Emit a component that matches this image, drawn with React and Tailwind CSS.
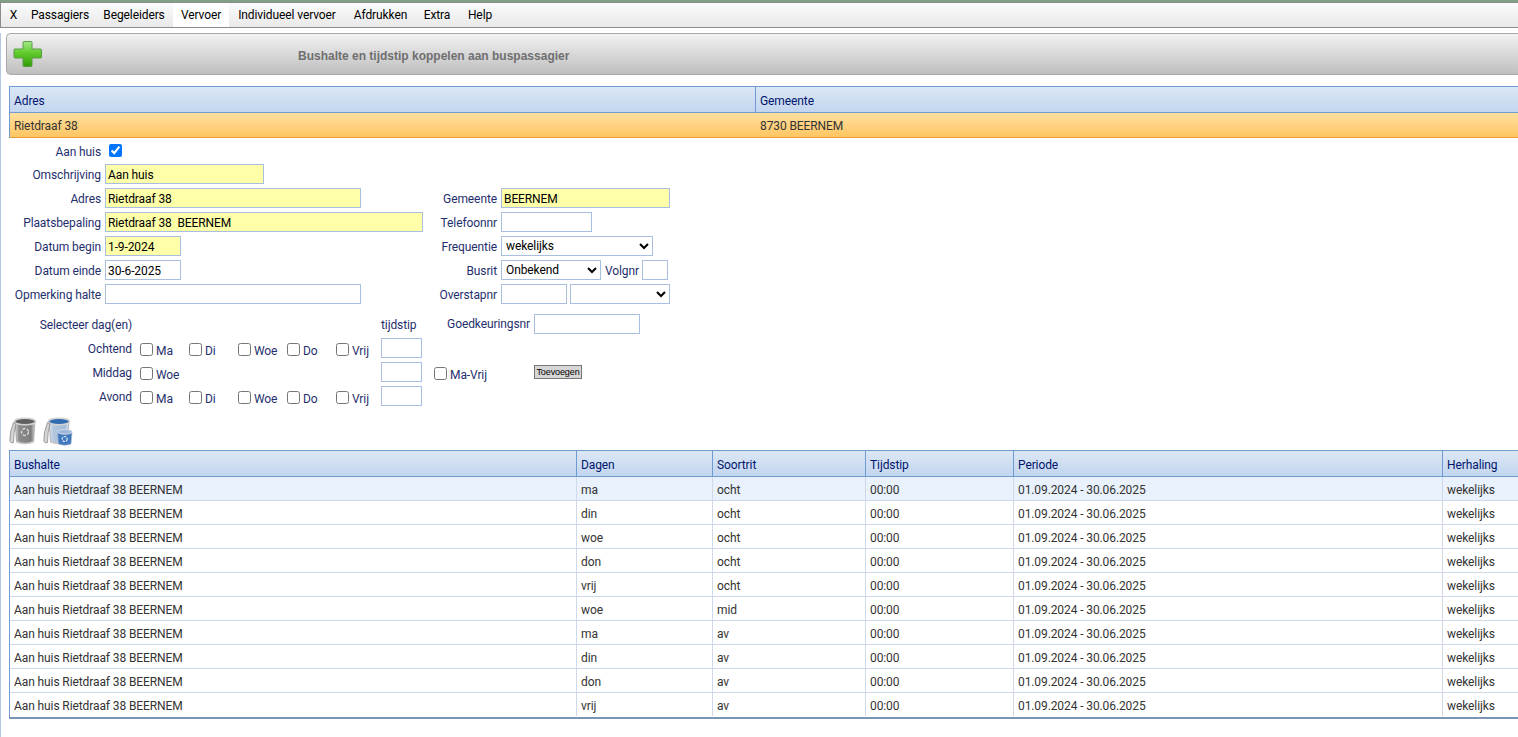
import React from 'react';

const menu = [
  { name: 'X', width: 'w-[23px]' },
  { name: 'Passagiers', width: 'w-[70px]' },
  { name: 'Begeleiders', width: 'w-[78px]' },
  { name: 'Vervoer', width: 'w-[56px]' },
  { name: 'Individueel vervoer', width: 'w-[116px]' },
  { name: 'Afdrukken', width: 'w-[71px]' },
  { name: 'Extra', width: 'w-[42px]' },
  { name: 'Help', width: 'w-[44px]' },
];

const columns = [
  { title: 'Bushalte', width: 'w-[567px]' },
  { title: 'Dagen', width: 'w-[136px]' },
  { title: 'Soortrit', width: 'w-[153px]' },
  { title: 'Tijdstip', width: 'w-[148px]' },
  { title: 'Periode', width: 'w-[429px]' },
  { title: 'Herhaling', width: 'flex-1' },
];

const stops = [
  ['ma', 'ocht'],
  ['din', 'ocht'],
  ['woe', 'ocht'],
  ['don', 'ocht'],
  ['vrij', 'ocht'],
  ['woe', 'mid'],
  ['ma', 'av'],
  ['din', 'av'],
  ['don', 'av'],
  ['vrij', 'av'],
];

const dayNames = ['Ma', 'Di', 'Woe', 'Do', 'Vrij'];

function PlusIcon() {
  return (
    <svg width="30" height="28" viewBox="0 0 30 28" className="block">
      <defs>
        <linearGradient id="plusFill" x1="0" y1="0" x2="0" y2="1">
          <stop offset="0" stopColor="#a5e88a" />
          <stop offset="0.45" stopColor="#62cc2c" />
          <stop offset="1" stopColor="#2f9c08" />
        </linearGradient>
      </defs>
      <path d="M11 1.5h7a1 1 0 0 1 1 1V9h8.500a1 1 0 0 1 1 1v7a1 1 0 0 1-1 1H19v7.500a1 1 0 0 1-1 1h-7a1 1 0 0 1-1-1V18H2a1 1 0 0 1-1-1v-7a1 1 0 0 1 1-1h8V2.500a1 1 0 0 1 1-1z" fill="url(#plusFill)" stroke="#5a9a48" strokeWidth="1" />
    </svg>
  );
}

function BinIcon({ blue }) {
  const id = blue ? 'binB' : 'binG';
  return (
    <svg width="30" height="29" viewBox="0 0 30 29" className="block">
      <defs>
        <linearGradient id={id} x1="0" y1="0" x2="1" y2="0">
          <stop offset="0" stopColor={blue ? '#e2e9f2' : '#e2e2e2'} />
          <stop offset="0.2" stopColor={blue ? '#b4c8df' : '#8c8c8c'} />
          <stop offset="0.8" stopColor={blue ? '#a3bbd6' : '#7d7d7d'} />
          <stop offset="1" stopColor={blue ? '#dfe8f2' : '#dcdcdc'} />
        </linearGradient>
      </defs>
      <path d="M6 4 L7.500 25 Q16 28.500 24.500 25 L26 4 Z" fill={`url(#${id})`} stroke="#8f8f8f" strokeWidth="0.6" />
      <ellipse cx="16" cy="4.500" rx="10.500" ry="3.200" fill={blue ? '#2f6db0' : '#5f5f5f'} stroke="#d2d2d2" strokeWidth="1.500" />
      <path d="M4.500 5.500 Q0.500 15 0.800 24 Q2 27 4.500 25.500 Q4.500 15 7 7 Z" fill="#d4d4d4" stroke="#7f7f7f" strokeWidth="0.7" />
      <path d="M7.500 24.500 Q16 28.500 25 24.500" fill="none" stroke="#c8c8c8" strokeWidth="1.500" />
      {!blue && <circle cx="16" cy="15" r="3.500" fill="none" stroke="#d8d8d8" strokeWidth="1.400" strokeDasharray="3 1.500" />}
      {blue && (
        <g>
          <path d="M14.500 15 L15.500 27 Q21.500 29.500 28 27 L29 15 Z" fill="#3f78bd" stroke="#9fb4cc" strokeWidth="0.6" />
          <ellipse cx="21.700" cy="14.800" rx="7.300" ry="2.400" fill="#9db8d8" stroke="#d5dde7" strokeWidth="1" />
          <circle cx="21.700" cy="22" r="2.500" fill="none" stroke="#e2eefa" strokeWidth="1.200" strokeDasharray="2.500 1" />
        </g>
      )}
    </svg>
  );
}

function Field({ value = '', width, yellow }) {
  return (
    <input
      readOnly
      value={value}
      className={`h-[20px] ${width} shrink-0 border border-[#a9bfdf] px-[2px] pt-[1px] text-[12px] leading-[16px] text-black outline-none ${yellow ? 'bg-[#ffffaa]' : 'bg-white'}`}
    />
  );
}

function Choice({ value, width }) {
  return (
    <select
      defaultValue={value}
      className={`h-[20px] ${width} shrink-0 border border-[#a9bfdf] bg-white text-[12px] text-black outline-none`}
    >
      <option value={value}>{value}</option>
    </select>
  );
}

function Row({ label, children, labelWidth = 'w-[100px]' }) {
  return (
    <div className="flex h-[24px] items-start gap-[4px]">
      <label className={`${labelWidth} h-[20px] shrink-0 text-right leading-[22px] text-[#1f2f6e]`}>{label}</label>
      {children}
    </div>
  );
}

function Check({ label, checked }) {
  return (
    <label className="flex items-center gap-[3px] text-[#1f2f6e]">
      <input type="checkbox" readOnly checked={!!checked} className="m-0 h-[13px] w-[13px] shrink-0" />
      {label && <span className="mt-[3px]">{label}</span>}
    </label>
  );
}

function DayRow({ label, days, children }) {
  return (
    <div className="flex h-[24px] items-start">
      <label className="h-[20px] w-[131px] shrink-0 text-right leading-[23px] text-[#1f2f6e]">{label}</label>
      <div className="flex h-[22px] w-[249px] shrink-0 pl-[8px]">
        {days.map((d) => (
          <div key={d} className="flex h-[22px] w-[49px] shrink-0">
            <Check label={d} />
          </div>
        ))}
      </div>
      <Field width="w-[41px]" />
      {children}
    </div>
  );
}

function HeaderCell({ title, width, last }) {
  return (
    <div className={`${width} flex items-center px-[4px] pt-[2px] text-[#00156e] ${last ? '' : 'border-r border-[#6f9bd1]'}`}>
      {title}
    </div>
  );
}

export default function App() {
  return (
    <div className="h-[737px] w-[1518px] overflow-hidden bg-white font-['Roboto',sans-serif] text-[12px] tracking-[-0.1px] text-[#333]">
      {/* menu */}
      <div className="h-[2px] bg-[#7f9f86]" />
      <div className="flex h-[26px] items-stretch border-y border-l border-b-[#8c8c8c] border-l-[#8c8c8c] border-t-[#8c8c8c] bg-gradient-to-b from-[#fbfbfb] to-[#e9e9e9] pl-[1px] text-black">
        {menu.map((m) => (
          <div key={m.name} className={`flex ${m.width} items-center justify-center whitespace-nowrap ${m.name === 'Vervoer' ? 'bg-white' : ''}`}>{m.name}</div>
        ))}
      </div>

      <div className="h-[709px] border-l border-[#b4c8e4]">
        {/* toolbar */}
        <div className="ml-[5px] mt-[5px] flex h-[42px] items-center rounded-l-[5px] border border-r-0 border-[#a8a8a8] bg-gradient-to-b from-[#f2f2f2] to-[#bfbfbf]">
          <div className="ml-[6px] w-[285px] shrink-0"><PlusIcon /></div>
          <span className="mt-[3px] font-['Liberation_Sans',sans-serif] font-bold tracking-normal text-[#6f6f6f]">Bushalte en tijdstip koppelen aan buspassagier</span>
        </div>

        {/* adres */}
        <div className="ml-[8px] mt-[11px] border-l border-[#6f9bd1]">
          <div className="flex h-[27px] border-y border-[#6f9bd1] bg-gradient-to-b from-[#dce7f5] to-[#c2d6ef]">
            <HeaderCell title="Adres" width="w-[746px]" />
            <HeaderCell title="Gemeente" width="flex-1" last />
          </div>
          <div className="flex h-[25px] items-center border-b border-[#e89a3c] bg-gradient-to-b from-[#ffdf9f] to-[#ffc660] pt-[2px]">
            <div className="w-[746px] px-[4px]">Rietdraaf 38</div>
            <div className="px-[4px]">8730 BEERNEM</div>
          </div>
        </div>

        {/* form */}
        <div className="flex pt-[2px]">
          <div className="w-[429px] shrink-0">
            <div className="flex h-[24px] items-start gap-[8px]">
              <label className="h-[20px] w-[100px] shrink-0 pt-[2px] text-right leading-[21px] text-[#1f2f6e]">Aan huis</label>
              <input type="checkbox" readOnly checked className="m-0 mt-[4px] h-[13px] w-[13px]" />
            </div>
            <Row label="Omschrijving"><Field value="Aan huis" width="w-[159px]" yellow /></Row>
            <Row label="Adres"><Field value="Rietdraaf 38" width="w-[256px]" yellow /></Row>
            <Row label="Plaatsbepaling"><Field value="Rietdraaf 38  BEERNEM" width="w-[318px]" yellow /></Row>
            <Row label="Datum begin"><Field value="1-9-2024" width="w-[76px]" yellow /></Row>
            <Row label="Datum einde"><Field value="30-6-2025" width="w-[76px]" /></Row>
            <Row label="Opmerking halte"><Field width="w-[256px]" /></Row>
          </div>
          <div className="pt-[48px]">
            <Row label="Gemeente" labelWidth="w-[67px]"><Field value="BEERNEM" width="w-[169px]" yellow /></Row>
            <Row label="Telefoonnr" labelWidth="w-[67px]"><Field width="w-[91px]" /></Row>
            <Row label="Frequentie" labelWidth="w-[67px]"><Choice value="wekelijks" width="w-[152px]" /></Row>
            <Row label="Busrit" labelWidth="w-[67px]">
              <Choice value="Onbekend" width="w-[100px]" />
              <span className="w-[33px] whitespace-nowrap leading-[22px] text-[#1f2f6e]">Volgnr</span>
              <Field width="w-[26px]" />
            </Row>
            <Row label="Overstapnr" labelWidth="w-[67px]">
              <div className="flex gap-[3px]">
                <Field width="w-[66px]" />
                <Choice value="" width="w-[100px]" />
              </div>
            </Row>
          </div>
        </div>

        {/* dagen */}
        <div className="mt-[6px]">
          <div className="flex h-[24px] items-end pb-[2px]">
            <span className="w-[131px] shrink-0 text-right leading-[21px] text-[#1f2f6e]">Selecteer dag(en)</span>
            <span className="ml-[249px] w-[64px] shrink-0 leading-[21px] text-[#1f2f6e]">tijdstip</span>
            <div className="flex items-center gap-[4px] self-start">
              <span className="w-[85px] text-right leading-[20px] text-[#1f2f6e]">Goedkeuringsnr</span>
              <Field width="w-[106px]" />
            </div>
          </div>
          <DayRow label="Ochtend" days={dayNames} />
          <DayRow label="Middag" days={['Woe']}>
            <div className="ml-[12px] flex w-[100px] shrink-0 pt-[1px]"><Check label="Ma-Vrij" /></div>
            <button className="mt-[3px] h-[14px] w-[48px] border border-[#767676] bg-[#d6d6d6] font-['Liberation_Sans',sans-serif] text-[9px] leading-[12px] text-black">Toevoegen</button>
          </DayRow>
          <DayRow label="Avond" days={dayNames} />
        </div>

        {/* acties */}
        <div className="ml-[8px] mt-[7px] flex h-[29px] gap-[4px]">
          <BinIcon />
          <BinIcon blue />
        </div>

        {/* bushaltes */}
        <div className="ml-[8px] mt-[4px] border-b-2 border-l border-b-[#7a94b5] border-l-[#6f9bd1]">
          <div className="flex h-[27px] border-y border-[#6f9bd1] bg-gradient-to-b from-[#dce7f5] to-[#c2d6ef]">
            {columns.map((c, i) => (
              <HeaderCell key={c.title} title={c.title} width={c.width} last={i === columns.length - 1} />
            ))}
          </div>
          {stops.map(([day, trip], i) => (
            <div key={i} className={`flex h-[24px] border-b ${i < stops.length - 1 ? 'border-[#d0d9ea]' : 'border-transparent'} ${i === 0 ? 'bg-[#e8f1fc]' : 'bg-white'}`}>
              {['Aan huis Rietdraaf 38 BEERNEM', day, trip, '00:00', '01.09.2024 - 30.06.2025', 'wekelijks'].map((val, j) => (
                <div key={j} className={`${columns[j].width} flex items-center px-[4px] pt-[3px] ${j < 5 ? 'border-r border-[#d0d9ea]' : ''}`}>{val}</div>
              ))}
            </div>
          ))}
        </div>
      </div>
    </div>
  );
}
